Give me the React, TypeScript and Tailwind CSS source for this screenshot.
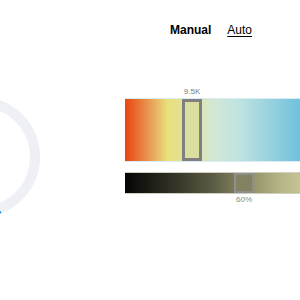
export default function App() {
  return (
    <div className="w-[300px] h-[300px] overflow-hidden bg-white flex" style={{ fontFamily: '"Liberation Sans", Arial, sans-serif' }}>
      <div className="shrink-0 w-[120px] h-[120px] ml-[-80px] mt-[97px]">
        <svg width="120" height="120" viewBox="0 0 120 120">
          <circle cx="60" cy="60" r="55" fill="none" stroke="#eff0f5" strokeWidth="10" />
          <path d="M 81 115 A 55 55 0 0 1 5 60" fill="none" stroke="#1e88e5" strokeWidth="2" />
        </svg>
      </div>
      <div className="shrink-0 w-[176px] ml-[85px] flex flex-col">
        <div className="flex items-center gap-[16px] pl-[45px] pt-[21px] text-[12px] text-black">
          <span className="font-bold">Manual</span>
          <span className="underline underline-offset-2">Auto</span>
        </div>
        <div className="relative mt-[59px] h-[64px] border-y border-[#d8eef4] bg-[linear-gradient(to_right,#e84510_0%,#e99a55_14%,#e8e07c_24%,#e0e4a8_40%,#d2e8d4_50%,#bfe3e2_65%,#99d2df_82%,#6ec1dc_100%)]">
          <span className="absolute left-[57px] top-[-11px] w-[20px] text-center text-[8px] leading-none text-[#7a7a7a]">9.5K</span>
          <div className="absolute left-[57px] top-0 w-[20px] h-full border-[3px] border-[#808080] bg-[#dce09e]" />
        </div>
        <div className="relative mt-[10px] h-[22px] border-y border-[#cfcfbf] bg-[linear-gradient(to_right,#050505_0%,#2e2e22_25%,#5c5c44_50%,#8a8a62_68%,#b8b888_90%,#c4c494_100%)]">
          <div className="absolute left-[109px] top-0 w-[20px] h-full border-[2px] border-[#8e8e8e] bg-[#828260]" />
          <span className="absolute left-[109px] top-[23px] w-[20px] text-center text-[8px] leading-none text-[#8a8a8a]">60%</span>
        </div>
      </div>
    </div>
  )
}
